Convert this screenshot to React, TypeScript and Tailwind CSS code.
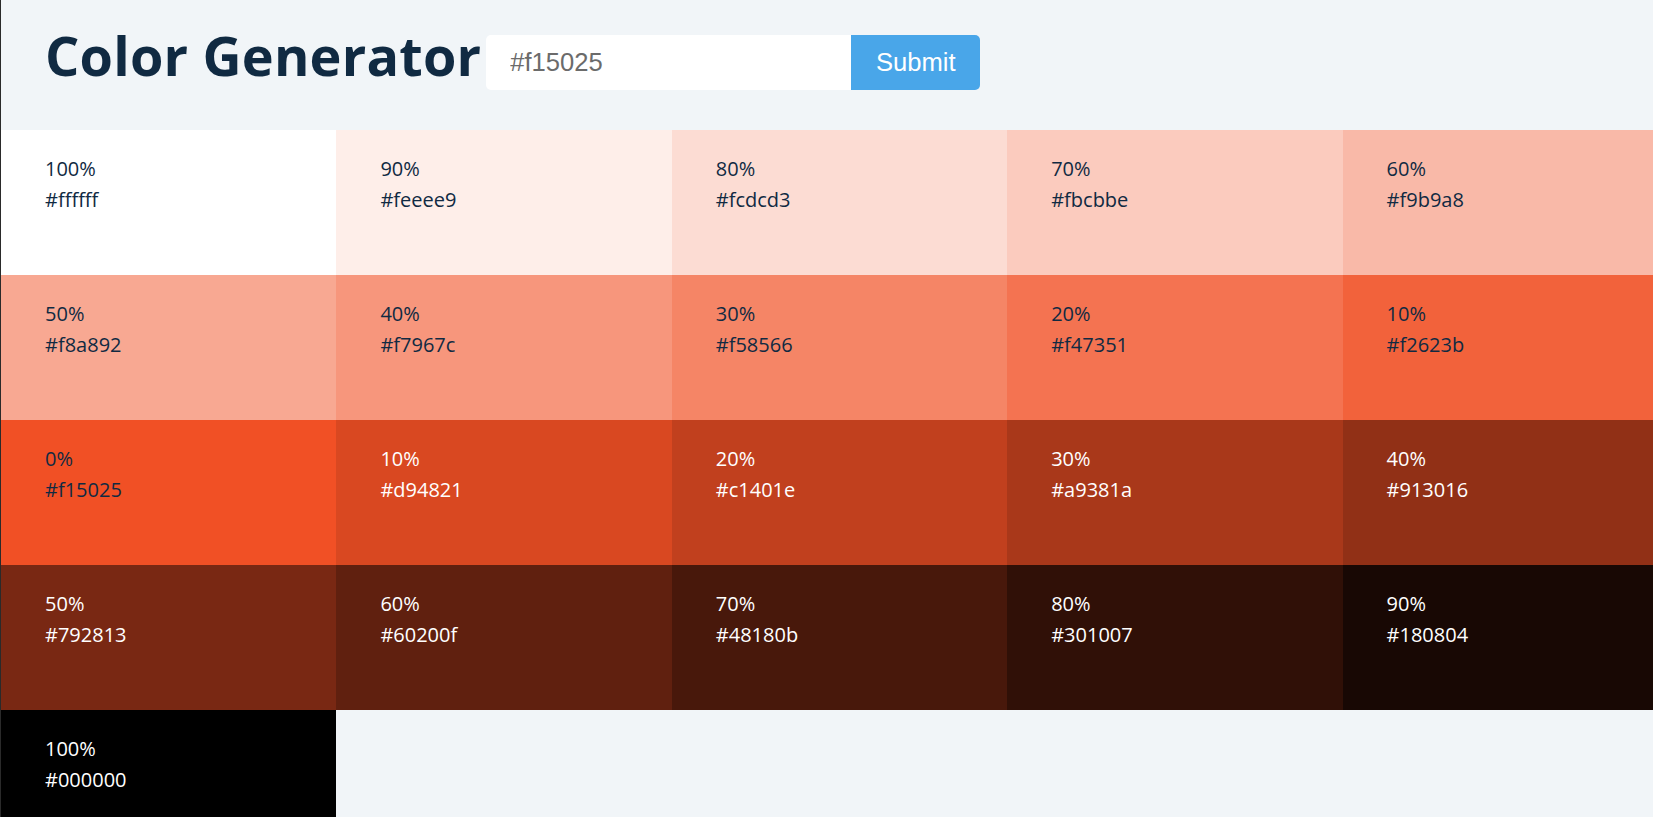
import React from "react";

const tints = [
  { weight: 100, hex: "#ffffff" },
  { weight: 90, hex: "#feeee9" },
  { weight: 80, hex: "#fcdcd3" },
  { weight: 70, hex: "#fbcbbe" },
  { weight: 60, hex: "#f9b9a8" },
  { weight: 50, hex: "#f8a892" },
  { weight: 40, hex: "#f7967c" },
  { weight: 30, hex: "#f58566" },
  { weight: 20, hex: "#f47351" },
  { weight: 10, hex: "#f2623b" },
  { weight: 0, hex: "#f15025" },
  { weight: 10, hex: "#d94821" },
  { weight: 20, hex: "#c1401e" },
  { weight: 30, hex: "#a9381a" },
  { weight: 40, hex: "#913016" },
  { weight: 50, hex: "#792813" },
  { weight: 60, hex: "#60200f" },
  { weight: 70, hex: "#48180b" },
  { weight: 80, hex: "#301007" },
  { weight: 90, hex: "#180804" },
  { weight: 100, hex: "#000000" },
];

const ColorTile = ({ weight, hex, index }: { weight: number; hex: string; index: number }) => {
  const dark = index > 10;
  return (
    <article
      className={`h-[145px] pl-[44px] pt-[23px] text-[20px] leading-[31px] ${
        dark ? "text-white" : "text-[#102a42]"
      }`}
      style={{ backgroundColor: hex }}
    >
      <p>{weight}%</p>
      <p>{hex}</p>
    </article>
  );
};

export default function App() {
  return (
    <div
      className="h-screen w-full overflow-hidden border-l border-[#2a2a2a] bg-[#f1f5f8]"
      style={{ fontFamily: '"Open Sans", "Noto Sans", sans-serif' }}
    >
      <section className="flex h-[130px] items-start">
        <h3 className="ml-[44px] mt-[22px] text-[54px] font-bold leading-[66px] tracking-[0.2px] text-[#102a42]">
          Color Generator
        </h3>
        <form className="ml-[5px] mt-[35px] flex h-[55px]">
          <input
            type="text"
            defaultValue=""
            placeholder="#f15025"
            className="h-full w-[365px] rounded-l-[5px] bg-white pl-[24px] text-[25.6px] text-[#333] outline-none placeholder:text-[#6b6b6b]"
            style={{ fontFamily: '"Liberation Sans", Arial, sans-serif' }}
          />
          <button
            type="submit"
            className="h-full w-[129px] rounded-r-[5px] bg-[#49a6e9] text-[25.6px] text-white"
            style={{ fontFamily: '"Liberation Sans", Arial, sans-serif' }}
          >
            Submit
          </button>
        </form>
      </section>
      <section className="grid w-[1677px] grid-cols-[repeat(5,335.4px)]">
        {tints.map((c, i) => (
          <ColorTile key={i} weight={c.weight} hex={c.hex} index={i} />
        ))}
      </section>
    </div>
  );
}
